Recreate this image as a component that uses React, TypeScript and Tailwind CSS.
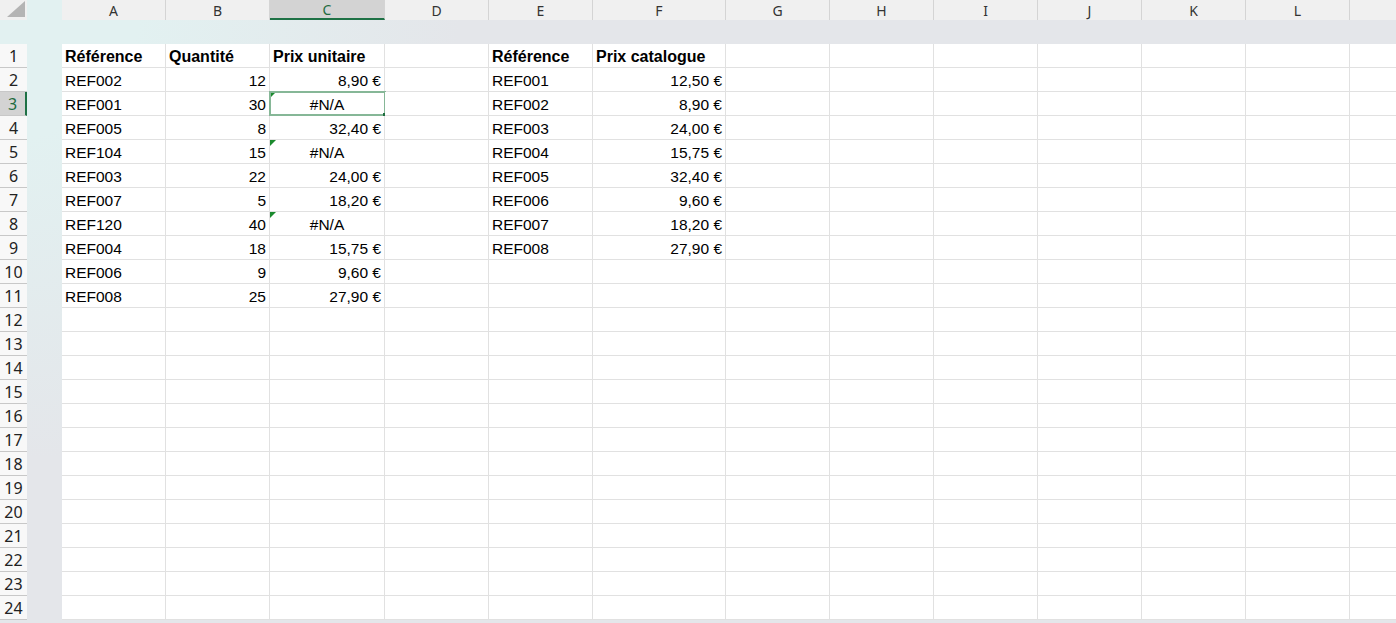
const COLS = [
  { l: "A" },
  { l: "B" },
  { l: "C" },
  { l: "D" },
  { l: "E" },
  { l: "F" },
  { l: "G" },
  { l: "H" },
  { l: "I" },
  { l: "J" },
  { l: "K" },
  { l: "L" },
  { l: "" },
];

const gridCols =
  "grid grid-cols-[104px_104px_115px_104px_104px_133px_104px_104px_104px_104px_104px_104px_104px]";

type Cell = { v: string; align?: "l" | "r" | "c"; bold?: boolean; flag?: boolean };

const left: Cell[][] = [
  [{ v: "Référence", bold: true }, { v: "Quantité", bold: true }, { v: "Prix unitaire", bold: true }],
  [{ v: "REF002" }, { v: "12", align: "r" }, { v: "8,90 €", align: "r" }],
  [{ v: "REF001" }, { v: "30", align: "r" }, { v: "#N/A", align: "c", flag: true }],
  [{ v: "REF005" }, { v: "8", align: "r" }, { v: "32,40 €", align: "r" }],
  [{ v: "REF104" }, { v: "15", align: "r" }, { v: "#N/A", align: "c", flag: true }],
  [{ v: "REF003" }, { v: "22", align: "r" }, { v: "24,00 €", align: "r" }],
  [{ v: "REF007" }, { v: "5", align: "r" }, { v: "18,20 €", align: "r" }],
  [{ v: "REF120" }, { v: "40", align: "r" }, { v: "#N/A", align: "c", flag: true }],
  [{ v: "REF004" }, { v: "18", align: "r" }, { v: "15,75 €", align: "r" }],
  [{ v: "REF006" }, { v: "9", align: "r" }, { v: "9,60 €", align: "r" }],
  [{ v: "REF008" }, { v: "25", align: "r" }, { v: "27,90 €", align: "r" }],
];

const right: Cell[][] = [
  [{ v: "Référence", bold: true }, { v: "Prix catalogue", bold: true }],
  [{ v: "REF001" }, { v: "12,50 €", align: "r" }],
  [{ v: "REF002" }, { v: "8,90 €", align: "r" }],
  [{ v: "REF003" }, { v: "24,00 €", align: "r" }],
  [{ v: "REF004" }, { v: "15,75 €", align: "r" }],
  [{ v: "REF005" }, { v: "32,40 €", align: "r" }],
  [{ v: "REF006" }, { v: "9,60 €", align: "r" }],
  [{ v: "REF007" }, { v: "18,20 €", align: "r" }],
  [{ v: "REF008" }, { v: "27,90 €", align: "r" }],
];

function rowCells(r: number): (Cell | null)[] {
  const out: (Cell | null)[] = [];
  const a = left[r];
  const b = right[r];
  out.push(a ? a[0] : null, a ? a[1] : null, a ? a[2] : null, null);
  out.push(b ? b[0] : null, b ? b[1] : null);
  for (let i = 0; i < 7; i++) out.push(null);
  return out;
}

function DataCell({ cell, selected }: { cell: Cell | null; selected: boolean }) {
  const align =
    cell?.align === "r" ? "justify-end" : cell?.align === "c" ? "justify-center" : "justify-start";
  return (
    <div
      className={`relative flex h-[24px] items-center border-r border-b border-[#e1e1e1] bg-white px-[3px] pt-[3px] ${align}`}
    >
      {cell && (
        <span
          className={`whitespace-nowrap text-black ${
            cell.bold ? "text-[16px] font-bold" : "text-[15.5px]"
          }`}
        >
          {cell.v}
        </span>
      )}
      {cell?.flag && (
        <svg className="absolute left-0 top-0" width="6" height="6" viewBox="0 0 6 6">
          <polygon points="0,0 6,0 0,6" fill="#1b8a2e" />
        </svg>
      )}
      {selected && (
        <div className="absolute -left-[1px] -top-[1px] h-[25px] w-[117px] border-2 border-[#86b797]">
          <div className="absolute -bottom-[3px] -right-[3px] h-[4px] w-[4px] bg-[#1e6e3f]" />
        </div>
      )}
    </div>
  );
}

export default function App() {
  const rows = Array.from({ length: 24 }, (_, i) => i);
  return (
    <div
      className="h-[623px] w-[1396px] overflow-hidden bg-[radial-gradient(circle_at_0_0,#e2f1f1_0px,#e2f1f1_140px,#e4e6ea_460px)]"
      style={{ fontFamily: '"Liberation Sans", Arial, sans-serif' }}
    >
      {/* column headers */}
      <div className="flex h-[20px]">
        <div className="h-[20px] w-[27px] shrink-0 bg-[#f0f0f0]">
          <svg width="27" height="20" viewBox="0 0 27 20">
            <polygon points="7,17 25,17 25,1" fill="#b4b4b4" />
          </svg>
        </div>
        <div className="w-[35px] shrink-0" />
        <div className={gridCols}>
          {COLS.map((c) => (
            <div
              key={c.l || "m"}
              className={`flex h-[20px] items-center justify-center border-r border-[#d4d4d4] text-[14px] ${
                c.l === "C"
                  ? "border-b-2 border-b-[#1e7145] bg-[#d3d3d3] text-[#1e6b40]"
                  : "bg-[#f0f0f0] text-[#333]"
              }`}
              style={{ fontFamily: '"Noto Sans", "Open Sans", sans-serif' }}
            >
              {c.l}
            </div>
          ))}
        </div>
      </div>

      {/* outline band */}
      <div className="h-[24px]" />

      {rows.map((r) => {
        const sel = r === 2;
        return (
          <div key={r} className="flex h-[24px]">
            <div
              className={`flex h-[24px] w-[27px] shrink-0 items-center justify-center border-b border-[#c8c8c8] text-[16px] ${
                sel
                  ? "border-r-2 border-r-[#1e7145] bg-[#d3d3d3] text-[#1e6b40]"
                  : "bg-[#f8f8f8] text-[#222]"
              }`}
              style={{ fontFamily: '"Noto Sans", "Open Sans", sans-serif' }}
            >
              {r + 1}
            </div>
            <div className="w-[35px] shrink-0" />
            <div className={gridCols}>
              {rowCells(r).map((c, i) => (
                <DataCell key={i} cell={c} selected={sel && i === 2} />
              ))}
            </div>
          </div>
        );
      })}
    </div>
  );
}
